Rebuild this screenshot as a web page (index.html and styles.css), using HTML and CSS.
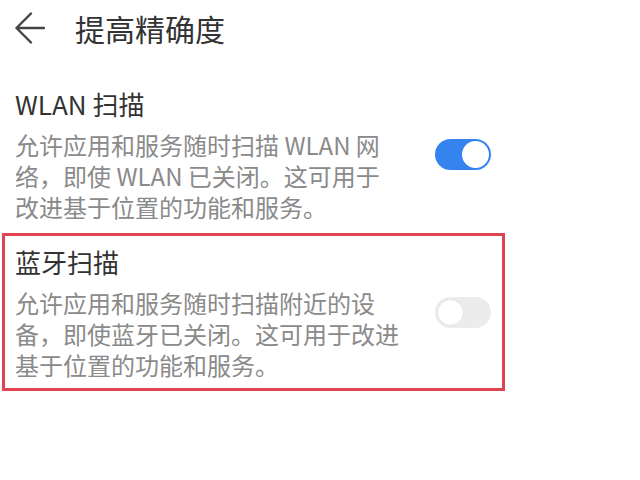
FILE: index.html
```html
<!DOCTYPE html>
<html lang="zh-CN">
<head>
    <meta charset="UTF-8">
    <meta name="viewport" content="width=device-width, initial-scale=1.0">
    <title>提高精确度</title>
    <link rel="stylesheet" href="styles.css">
</head>
<body>
    <div class="header">
        <svg class="back" width="30" height="32" viewBox="0 0 30 32">
            <path d="M16 1.5 L1.5 16 L16 30.5 M1.5 16 H29" fill="none" stroke="#444" stroke-width="2.4" stroke-linecap="round" stroke-linejoin="round"/>
        </svg>
        <h1>提高精确度</h1>
    </div>

    <div class="list">
        <div class="item">
            <div class="text">
                <div class="item-title">WLAN 扫描</div>
                <div class="item-desc">允许应用和服务随时扫描 WLAN 网络，即使 WLAN 已关闭。这可用于改进基于位置的功能和服务。</div>
            </div>
            <div class="switch on"><span class="knob"></span></div>
        </div>

        <div class="item marked">
            <div class="text">
                <div class="item-title">蓝牙扫描</div>
                <div class="item-desc">允许应用和服务随时扫描附近的设备，即使蓝牙已关闭。这可用于改进基于位置的功能和服务。</div>
            </div>
            <div class="switch"><span class="knob"></span></div>
        </div>
    </div>
</body>
</html>
```

FILE: styles.css
```css
body {
    margin: 0;
    background: #fff;
    font-family: "Noto Sans CJK SC", "Noto Sans", sans-serif;
    color: #333;
}
.header {
    display: flex;
    align-items: center;
    height: 56px;
    padding-left: 15px;
}
.back {
    display: block;
}
h1 {
    margin: 0 0 0 30px;
    font-size: 30px;
    font-weight: normal;
    line-height: 56px;
    color: #333;
}
.list {
    width: 503px;
    padding: 19px 0 0 2px;
}
.item {
    display: flex;
    align-items: center;
    padding: 11px 14px 11px 13px;
}
.item.marked {
    outline: 3px solid #df4450;
    outline-offset: -3px;
}
.text {
    width: 386px;
}
.item-title {
    font-size: 26px;
    line-height: 36px;
    color: #333;
}
.item-desc {
    margin-top: 7px;
    font-size: 24px;
    line-height: 31px;
    color: #8a8a8a;
}
.switch {
    margin-left: auto;
    width: 56px;
    height: 31px;
    border-radius: 16px;
    background: #ececec;
    box-sizing: border-box;
    padding: 2px;
    display: flex;
}
.knob {
    width: 27px;
    height: 27px;
    border-radius: 50%;
    background: #fff;
    box-sizing: border-box;
    border: 1px solid #e2e2e2;
}
.switch.on {
    background: #3483ef;
    justify-content: flex-end;
}
.switch.on .knob {
    border: none;
}
```
